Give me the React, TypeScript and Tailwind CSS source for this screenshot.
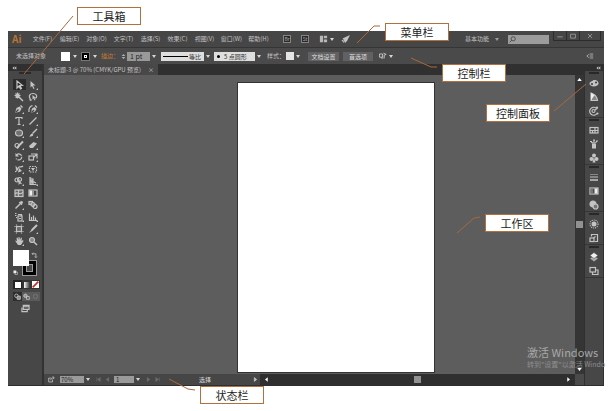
import React from "react";
import clsx from "clsx";

const menus = ["文件(F)", "编辑(E)", "对象(O)", "文字(T)", "选择(S)", "效果(C)", "视图(V)", "窗口(W)", "帮助(H)"];

function Icon({ children, className }: { children: React.ReactNode; className?: string }) {
  return (
    <svg viewBox="0 0 20 20" className={clsx("shrink-0", className ?? "size-[10px]")} fill="none" stroke="currentColor" strokeWidth={2.4} aria-hidden="true">
      {children}
    </svg>
  );
}

function Caret({ label, className }: { label: string; className?: string }) {
  return (
    <button type="button" aria-label={label} className={clsx("flex h-[9px] w-[7px] shrink-0 items-center justify-center", className)}>
      <svg viewBox="0 0 4 3" className="h-[3px] w-[4px]" fill="#d6d6d6">
        <path d="M0 0h4L2 3z" />
      </svg>
    </button>
  );
}

type Tool = { name: string; art: React.ReactNode; more?: boolean };

const tools: Tool[] = [
  { name: "选择工具", art: <path d="M6 2v14l4-4 3 6 2-1-3-6h5z" /> },
  { name: "直接选择工具", more: true, art: <path d="M5 2v13l3-3 3 6 2-1-3-6h5z" fill="currentColor" stroke="none" /> },
  { name: "魔棒工具", art: <><path d="M9 9l9 9" strokeWidth={3} /><path d="M7 1v12M1 7h12M3 3l8 8M11 3l-8 8" /></> },
  { name: "套索工具", art: <><path d="M5 14C0 8 4 3 10 3s10 5 5 10M5 14c-3 2 1 4 2 1" /><path d="M9 6v9l2-2 2 4 2-1-2-4h3z" fill="currentColor" stroke="none" /></> },
  { name: "钢笔工具", more: true, art: <><path d="M2 18l3-10 6-3 4 4-3 6z" fill="currentColor" stroke="none" /><path d="M13 3l4 4" strokeWidth={3} /><path d="M3 17l6-6" stroke="#474747" /></> },
  { name: "曲率工具", more: true, art: <><path d="M6 18l2-9 5-3 4 4-3 5z" fill="currentColor" stroke="none" /><path d="M14 3l4 4M2 16C1 9 3 5 9 3" /><path d="M7 17l5-5" stroke="#474747" /></> },
  { name: "文字工具", more: true, art: <path d="M4 6V3h12v3M10 3v14M7 17h6" /> },
  { name: "直线段工具", more: true, art: <path d="M3 17L17 3" /> },
  { name: "椭圆工具", more: true, art: <ellipse cx="10" cy="10" rx="7" ry="6" fill="#707070" /> },
  { name: "画笔工具", more: true, art: <><path d="M18 2L9 11" strokeWidth={3} /><path d="M2 17c3 0 2-6 7-6 4 4-1 7-7 6z" fill="currentColor" stroke="none" /></> },
  { name: "铅笔工具", more: true, art: <><circle cx="6" cy="11" r="4" /><path d="M18 3L9 12l-3 5" strokeWidth={4} /></> },
  { name: "橡皮擦工具", more: true, art: <path d="M2 12l9-8 7 3-8 9H4z" fill="currentColor" stroke="none" /> },
  { name: "旋转工具", more: true, art: <><path d="M5 6c6-5 12 0 10 6-2 5-8 5-11 1" strokeDasharray="12 2" /><path d="M3 2v7h7z" fill="currentColor" stroke="none" /></> },
  { name: "比例缩放工具", more: true, art: <><rect x="2" y="8" width="9" height="8" /><path d="M6 4h12v9M11 11l6-6" /></> },
  { name: "宽度工具", more: true, art: <><path d="M2 15c6 1 5-8 8-9 2-1 5 1 8-2" /><path d="M3 3l5 6-4 4zM10 8l6 6-8 3z" fill="currentColor" stroke="none" /></> },
  { name: "自由变换工具", art: <><rect x="3" y="5" width="14" height="11" strokeDasharray="3 2" /><path d="M6 8h8l-4 6z" fill="currentColor" stroke="none" /></> },
  { name: "形状生成器工具", more: true, art: <><circle cx="6" cy="8" r="4" /><circle cx="11" cy="7" r="4" /><path d="M9 7v11l3-3 5 2z" fill="currentColor" stroke="none" /></> },
  { name: "透视网格工具", more: true, art: <><path d="M4 2l6 3v12H4z" fill="#999" stroke="none" /><path d="M4 2v15h13M10 5v12M4 8l12 6M4 12h10" /></> },
  { name: "网格工具", art: <><rect x="2" y="4" width="16" height="13" fill="#666" /><path d="M2 12c6-8 9 6 16-4M8 4c5 4-3 8 2 13" /></> },
  { name: "渐变工具", art: <><rect x="2" y="4" width="16" height="12" /><path d="M3 5h5v10H3z" fill="#eee" stroke="none" /><path d="M8 5h4v10H8z" fill="#999" stroke="none" /></> },
  { name: "吸管工具", more: true, art: <><path d="M3 17l9-9" strokeWidth={3} /><path d="M11 4l5 5M13 7l4-4" strokeWidth={4} /></> },
  { name: "混合工具", art: <><rect x="2" y="3" width="7" height="6" fill="#777" /><circle cx="10" cy="9" r="4" fill="#888" /><circle cx="14" cy="13" r="4" /></> },
  { name: "符号喷枪工具", more: true, art: <><rect x="8" y="8" width="8" height="10" /><path d="M8 5h7v3M2 3h3M2 7h3M4 11h2M10 13h4" /></> },
  { name: "柱形图工具", more: true, art: <path d="M3 3v14h15M7 10v7M11 7v10M15 11v6" /> },
  { name: "画板工具", art: <><rect x="5" y="5" width="10" height="10" fill="#686868" /><path d="M5 1v2M15 1v2M5 17v2M15 17v2M1 5h2M1 15h2M17 5h2M17 15h2" /></> },
  { name: "切片工具", more: true, art: <><path d="M18 2L8 12" strokeWidth={4} /><path d="M8 10l2 3-8 5z" fill="currentColor" stroke="none" /></> },
  { name: "抓手工具", more: true, art: <path d="M2 9l4 1-1-6 2-1 2 5V2h2l1 6 2-5 2 1-1 6 3-2 1 2-5 8H8z" fill="currentColor" stroke="none" /> },
  { name: "缩放工具", art: <><circle cx="8" cy="8" r="5" fill="#888" /><path d="M12 12l6 6" strokeWidth={3} /></> },
];

const panels: Tool[][] = [
  [
    { name: "颜色", art: <><path d="M1 12c0-5 4-4 8-8 6-1 11 3 10 8-2 6-16 7-18 0z" fill="currentColor" stroke="none" /><circle cx="6" cy="12" r="1" stroke="#444" /><circle cx="14" cy="9" r="1" stroke="#444" /></> },
    { name: "颜色参考", art: <><path d="M4 2v15h13C16 10 11 4 4 2z" fill="#888" /><path d="M4 2v15L11 6z" fill="#eee" stroke="none" /></> },
    { name: "颜色主题", art: <><path d="M14 4a8 8 0 1 0 2 11" /><circle cx="9" cy="10" r="3" /><circle cx="16" cy="3" r="1" /><circle cx="17" cy="15" r="1" /><path d="M12 8l5-4" /></> },
  ],
  [
    { name: "色板", art: <><rect x="2" y="5" width="16" height="11" /><path d="M2 11h16M7 11v5M12 5v11" /></> },
    { name: "画笔", art: <><path d="M6 10h8v9H6z" fill="currentColor" stroke="none" /><path d="M10 10V3M8 9L4 5M12 9l4-5M2 5h4M8 2h4M14 4h4" /></> },
    { name: "符号", art: <><circle cx="10" cy="5" r="4" fill="currentColor" stroke="none" /><circle cx="5" cy="12" r="4" fill="currentColor" stroke="none" /><circle cx="15" cy="12" r="4" fill="currentColor" stroke="none" /><path d="M10 8l3 11H7z" fill="currentColor" stroke="none" /></> },
  ],
  [
    { name: "描边", art: <><path d="M2 5h16" strokeWidth={1} /><path d="M2 10h16" strokeWidth={2} /><path d="M2 16h16" strokeWidth={3} /></> },
    { name: "渐变", art: <><rect x="2" y="4" width="16" height="12" /><path d="M3 5h5v10H3z" fill="#777" stroke="none" /><path d="M11 5h6v10h-6z" fill="#eee" stroke="none" /></> },
    { name: "透明度", art: <><circle cx="8" cy="8" r="6" fill="currentColor" /><circle cx="13" cy="13" r="5" fill="#777" /></> },
  ],
  [
    { name: "外观", art: <><circle cx="10" cy="10" r="8" strokeDasharray="2 2" /><circle cx="10" cy="10" r="5" fill="currentColor" stroke="none" /></> },
    { name: "图形样式", art: <><path d="M5 7V3h12v14h-6" /><rect x="2" y="10" width="8" height="7" /><path d="M13 7l-4 3" /></> },
  ],
  [
    { name: "图层", art: <><path d="M10 8l8 5-8 6-8-6z" fill="#aaa" stroke="none" /><path d="M10 1l8 6-8 6-8-6z" fill="#f0f0f0" stroke="#444" strokeWidth={1} /></> },
    { name: "画板", art: <><rect x="2" y="3" width="11" height="9" /><path d="M7 12v5h11V8h-5" /></> },
  ],
];

const callouts = [
  { text: "工具箱", place: "left-[77px] top-[7px]" },
  { text: "菜单栏", place: "left-[385px] top-[23px]" },
  { text: "控制栏", place: "left-[442px] top-[64px]" },
  { text: "控制面板", place: "left-[486px] top-[104px]" },
  { text: "工作区", place: "left-[485px] top-[214px]" },
  { text: "状态栏", place: "left-[200px] top-[386px]" },
];

function MenuBar() {
  return (
    <header className="flex h-4 items-center bg-[#464646]">
      <span className="w-[21px] pl-1 text-[10px] leading-4 font-bold text-[#b87333]">Ai</span>
      <nav className="flex" aria-label="菜单栏">
        {menus.map((m) => (
          <button key={m} type="button" className="w-[27px] text-center whitespace-nowrap">{m}</button>
        ))}
      </nav>
      <div className="ml-[11px] flex items-center gap-[10px]">
        <button type="button" className="size-2 border border-[#858585] bg-[#292929] text-[5px] leading-[6px] text-[#aaa]">Br</button>
        <button type="button" className="size-2 border border-[#858585] bg-[#292929] text-[5px] leading-[6px] text-[#aaa]">St</button>
        <div className="flex items-center">
          <button type="button" aria-label="排列文档">
            <Icon className="h-2 w-[9px]"><path d="M1 2h8v16H1zM11 2h8v6h-8zM11 11h8v7h-8z" fill="#b8b8b8" stroke="none" /></Icon>
          </button>
          <Caret label="排列文档选项" />
        </div>
        <button type="button" aria-label="GPU 性能" className="-ml-1">
          <Icon><path d="M18 2L3 9l4 3 1 6 4-4z" fill="#c4c4c4" stroke="none" /><path d="M2 12l4 5M5 11l4 5" /></Icon>
        </button>
      </div>
      <div className="ml-auto flex h-full items-center pr-[3px]">
        <button type="button">基本功能</button>
        <Caret label="工作区选项" className="ml-1 opacity-60" />
        <label className="mr-1 ml-2 flex h-[9px] w-[41px] items-center bg-[#9c9c9c]">
          <Icon className="ml-px size-[7px] text-[#444]"><circle cx="12" cy="8" r="6" /><path d="M8 12l-6 6" /></Icon>
          <input aria-label="搜索" className="w-[30px] text-[6px] outline-none" />
        </label>
        <div className="flex self-start border border-t-0 border-[#2c2c2c] text-[#999]">
          <button type="button" aria-label="最小化" className="flex h-[9px] w-[13px] items-center justify-center border-r border-[#2c2c2c]"><Icon className="size-[6px]"><path d="M1 13h18" strokeWidth={3} /></Icon></button>
          <button type="button" aria-label="最大化" className="flex h-[9px] w-[13px] items-center justify-center border-r border-[#2c2c2c]"><Icon className="size-[6px]"><path d="M2 4h16v13H2z" strokeWidth={3} /></Icon></button>
          <button type="button" aria-label="关闭" className="flex h-[9px] w-[20px] items-center justify-center"><Icon className="size-[6px]"><path d="M3 3l14 14M17 3L3 17" strokeWidth={3} /></Icon></button>
        </div>
      </div>
    </header>
  );
}

function ControlBar() {
  return (
    <div className="flex h-[17px] items-center border-t border-[#353535] bg-[#4a4a4a] pl-2">
      <span className="w-[45px]">未选择对象</span>
      <button type="button" aria-label="填色" className="size-[9px] bg-white" />
      <Caret label="填色选项" className="ml-px" />
      <button type="button" aria-label="描边颜色" className="ml-[3px] flex size-[9px] items-center justify-center border border-[#777] bg-black">
        <span className="size-[3px] border border-white" />
      </button>
      <Caret label="描边颜色选项" className="ml-px" />
      <label htmlFor="stroke" className="ml-[3px] w-[20px] text-[#c47a34]">描边：</label>
      <Icon className="h-[9px] w-[5px] text-[#ccc]"><path d="M2 7l8-6 8 6zM2 13l8 6 8-6z" fill="currentColor" stroke="none" /></Icon>
      <input id="stroke" defaultValue="1 pt" className="ml-px h-[9px] w-[23px] bg-[#999] pl-[3px] text-[7px] text-[#222] outline-none" />
      <Caret label="描边粗细" />
      <div className="ml-[4px] flex h-[9px] w-[43px] items-center bg-[#dedede] pl-[2px]">
        <span className="h-px w-[25px] bg-black" />
        <select aria-label="变量宽度配置文件" className="h-[9px] w-[15px] appearance-none pl-px text-[6px] leading-[9px] text-[#333] outline-none"><option>等比</option></select>
      </div>
      <Caret label="宽度配置文件列表" />
      <div className="ml-[3px] flex h-[9px] w-[41px] items-center gap-[4px] bg-[#dedede] pl-[3px]">
        <span className="size-[3px] rounded-full bg-black" />
        <select aria-label="画笔定义" className="h-[9px] w-[30px] appearance-none text-[6px] leading-[9px] text-[#333] outline-none"><option>5 点圆形</option></select>
      </div>
      <Caret label="画笔列表" />
      <span className="ml-[5px] w-[19px] whitespace-nowrap">样式：</span>
      <button type="button" aria-label="图形样式" className="size-[8px] bg-[#e4e4e4]" />
      <Caret label="图形样式列表" />
      <button type="button" className="ml-[7px] h-[9px] w-[31px] bg-[#616161] text-center leading-[9px] text-[#ddd]">文档设置</button>
      <button type="button" className="ml-[4px] h-[9px] w-[30px] bg-[#616161] text-center leading-[9px] text-[#ddd]">首选项</button>
      <button type="button" aria-label="选择类似的对象" className="ml-[6px]"><Icon className="size-[8px]"><path d="M1 5h8v8H1zM11 3l7 3-5 2v8M5 15h6" /></Icon></button>
      <Caret label="类似对象选项" />
      <button type="button" aria-label="控制栏菜单" className="mr-[10px] ml-auto"><Icon className="size-[8px] text-[#aaa]"><path d="M7 6l-5 4 5 4M9 5h9M9 10h9M9 15h9" /></Icon></button>
    </div>
  );
}

function ToolBox() {
  return (
    <aside className="w-9 shrink-0 border-r-2 border-[#323232] bg-[#474747]" aria-label="工具箱">
      <div className="flex h-[7px] items-center bg-[#303030] pl-1">
        <Icon className="h-[4px] w-[5px]"><path d="M9 1v18L0 10zM19 1v18l-9-9z" fill="currentColor" stroke="none" /></Icon>
      </div>
      <div className="mx-auto mt-px mb-[5px] h-[2px] w-[12px] bg-[#2b2b2b]" />
      <div className="grid grid-cols-2 gap-x-px gap-y-px pr-[3px] pl-[5px]">
        {tools.map((t, i) => (
          <button key={t.name} type="button" aria-label={t.name} className={clsx("flex h-[11px] items-center justify-center", i === 0 && "bg-[#2b2b2b]", i >= 20 && "pt-px")}>
            <Icon>
              {t.art}
              {t.more && <path d="M20 16v4h-4z" fill="currentColor" stroke="none" />}
            </Icon>
          </button>
        ))}
      </div>
      <div className="mt-[4px] grid h-[26px] grid-cols-[5px_9px_7px_8px] grid-rows-[10px_6px_10px]">
        <button type="button" aria-label="描边" className="col-span-2 col-start-3 row-span-2 row-start-2 border border-[#999] bg-black p-[3px]">
          <span className="block h-full w-full border border-[#999] bg-[#474747]" />
        </button>
        <button type="button" aria-label="填色" className="z-10 col-span-2 col-start-2 row-span-2 row-start-1 bg-white" />
        <button type="button" aria-label="互换填色和描边" className="col-start-4 row-start-1 pl-[2px]"><Icon className="size-[7px]"><path d="M3 5h11v11M6 2L3 5l3 3M11 13l3 3 3-3" /></Icon></button>
        <button type="button" aria-label="默认填色和描边" className="col-start-2 row-start-3 pt-[3px]"><Icon className="size-[5px]"><path d="M8 8h10v10H8z" /><path d="M2 2h11v11H2z" fill="#eee" stroke="none" /></Icon></button>
      </div>
      <div className="mt-[4px] ml-[5px] grid w-[27px] grid-cols-3 bg-[#333]">
        <button type="button" aria-label="颜色" className="flex h-[9px] items-center justify-center bg-[#222]"><span className="size-[6px] bg-white" /></button>
        <button type="button" aria-label="渐变" className="flex h-[9px] items-center justify-center"><span className="size-[6px] bg-linear-to-r from-white to-[#333]" /></button>
        <button type="button" aria-label="无" className="flex h-[9px] items-center justify-center"><Icon className="size-[7px]"><path d="M0 0h20v20H0z" fill="#fff" stroke="none" /><path d="M2 18L18 2" stroke="#c2322b" strokeWidth={5} /></Icon></button>
      </div>
      <div className="mt-[3px] ml-[5px] grid w-[27px] grid-cols-3 bg-[#5b5b5b]">
        <button type="button" aria-label="正常绘图" className="flex h-[9px] items-center justify-center bg-[#2e2e2e]"><Icon className="size-[7px]"><circle cx="7" cy="8" r="5" /><path d="M9 9h9v9H9z" fill="#888" /></Icon></button>
        <button type="button" aria-label="背面绘图" className="flex h-[9px] items-center justify-center"><Icon className="size-[7px]"><circle cx="7" cy="8" r="5" fill="#999" /><path d="M10 10h8v8h-8z" /></Icon></button>
        <button type="button" aria-label="内部绘图" className="flex h-[9px] items-center justify-center opacity-30"><Icon className="size-[7px]"><circle cx="10" cy="10" r="6" /></Icon></button>
      </div>
      <button type="button" aria-label="更改屏幕模式" className="mt-[3px] ml-[12px] block"><Icon className="h-[9px] w-[11px]"><path d="M5 3h13v9H5zM2 8v9h12v-5M5 6h13" /></Icon></button>
    </aside>
  );
}

function StatusBar() {
  return (
    <footer className="flex h-[11px] bg-[#2f2f2f]">
      <div className="flex w-[216px] shrink-0 items-center bg-[#464646] pl-[4px]">
        <button type="button" aria-label="共享"><Icon className="size-[7px]"><path d="M13 11v6H2V6h6M8 12c0-6 4-7 8-7M13 1l5 4-5 4" /></Icon></button>
        <input aria-label="缩放比例" defaultValue="70%" className="ml-[5px] h-[7px] w-[24px] bg-[#9a9a9a] pl-px text-[6px] leading-[7px] text-[#222] outline-none" />
        <Caret label="缩放列表" />
        <button type="button" aria-label="首项" className="ml-[5px] opacity-30"><Icon className="size-[5px]"><path d="M3 2v16M17 2v16L6 10z" fill="currentColor" /></Icon></button>
        <button type="button" aria-label="上一项" className="ml-[4px] opacity-30"><Icon className="size-[5px]"><path d="M15 2v16L5 10z" fill="currentColor" /></Icon></button>
        <input aria-label="画板导航" defaultValue="1" className="ml-[4px] h-[7px] w-[20px] bg-[#9a9a9a] pl-[2px] text-[6px] leading-[7px] text-[#222] outline-none" />
        <Caret label="画板列表" />
        <button type="button" aria-label="下一项" className="ml-[5px] opacity-30"><Icon className="size-[5px]"><path d="M5 2v16l10-8z" fill="currentColor" /></Icon></button>
        <button type="button" aria-label="末项" className="ml-[4px] opacity-30"><Icon className="size-[5px]"><path d="M17 2v16M3 2v16l11-8z" fill="currentColor" /></Icon></button>
        <span className="ml-auto text-[#ddd]">选择</span>
        <button type="button" aria-label="状态栏选项" className="mr-[2px] ml-[42px]"><Icon className="size-[5px]"><path d="M5 2v16l10-8z" fill="currentColor" /></Icon></button>
      </div>
      <div className="flex flex-1 items-center justify-between px-[4px]">
        <Icon className="size-[5px] text-white"><path d="M15 1v18L4 10z" fill="currentColor" stroke="none" /></Icon>
        <span className="size-[7px] bg-[#919191]" />
        <Icon className="size-[5px] text-white"><path d="M5 1v18l11-9z" fill="currentColor" stroke="none" /></Icon>
      </div>
      <div className="w-[9px] bg-[#4a4a4a]" />
    </footer>
  );
}

function PanelDock() {
  return (
    <aside className="w-[20px] shrink-0 border-x border-[#303030] bg-[#474747]" aria-label="控制面板">
      <div className="flex h-[7px] items-center justify-end bg-[#303030] pr-[2px]">
        <Icon className="h-[4px] w-[5px]"><path d="M9 1v18L0 10zM19 1v18l-9-9z" fill="currentColor" stroke="none" /></Icon>
      </div>
      {panels.map((group, i) => (
        <div key={i} className="flex flex-col items-center gap-[4px] border-b border-[#363636] pb-px">
          <span className="mt-px h-[2px] w-[10px] bg-[#282828]" />
          {group.map((p) => (
            <button key={p.name} type="button" aria-label={p.name}><Icon>{p.art}</Icon></button>
          ))}
        </div>
      ))}
    </aside>
  );
}

export default function App() {
  return (
    <main className="relative min-h-screen overflow-hidden bg-white pt-[31px] pr-[5px] pb-[26px] pl-2 font-['Noto_Sans_CJK_SC','Liberation_Sans',sans-serif] text-[6px] leading-[8px] text-[#c4c4c4] [&_button]:shrink-0 [&_svg]:block">
      <div className="border-b border-[#2e2e2e] bg-[#474747]">
        <MenuBar />
        <ControlBar />
        <div className="flex">
          <ToolBox />
          <div className="flex min-w-0 flex-1 flex-col">
            <div className="flex h-[11px] bg-[#303030]">
              <div className="flex w-[114px] items-center justify-between bg-[#484848] px-[4px] whitespace-nowrap">
                <span>未标题-3 @ 70% (CMYK/GPU 预览)</span>
                <button type="button" aria-label="关闭文档">×</button>
              </div>
            </div>
            <div className="flex flex-1">
              <div className="flex flex-1 justify-center bg-[#5d5d5d] pt-[8px] pb-[2px] pl-[52px]">
                <div className="h-[289px] w-[196px] bg-white outline outline-[#333]" />
              </div>
              <div className="flex w-[9px] flex-col items-center justify-between bg-[#353535] py-[2px]">
                <Icon className="size-[5px] text-white"><path d="M1 16h18L10 4z" fill="currentColor" stroke="none" /></Icon>
                <span className="size-[7px] bg-[#919191]" />
                <Icon className="size-[5px] text-white"><path d="M1 4h18l-9 12z" fill="currentColor" stroke="none" /></Icon>
              </div>
            </div>
            <StatusBar />
          </div>
          <PanelDock />
        </div>
      </div>

      {/* Activation notice floats over the canvas */}
      <div className="absolute top-[345px] left-[527px] whitespace-nowrap text-[#a8a8a8]">
        <p className="text-[11px] leading-[14px]">激活 Windows</p>
        <p className="text-[7px] leading-[10px] text-[#8e8e8e]">转到"设置"以激活 Windo</p>
      </div>

      {/* Leader lines and labels */}
      <svg className="pointer-events-none absolute top-0 left-0 h-[411px] w-[609px]" viewBox="0 0 609 411" fill="none" stroke="#a9683f" aria-hidden="true">
        <path d="M73 16L24 74" />
        <path d="M380 26h-6L357 43" />
        <path d="M437 67h-6L411 58" />
        <path d="M554 111L586 84" />
        <path d="M480 217l-6 1-17 15" />
        <path d="M195 390l-7-1-19-10" />
      </svg>
      {callouts.map((c) => (
        <div key={c.text} className={clsx("absolute flex h-[18px] w-[64px] items-center justify-center border border-[#b0713f] bg-white text-[11px] leading-4 text-[#222]", c.place)}>
          {c.text}
        </div>
      ))}
    </main>
  );
}
